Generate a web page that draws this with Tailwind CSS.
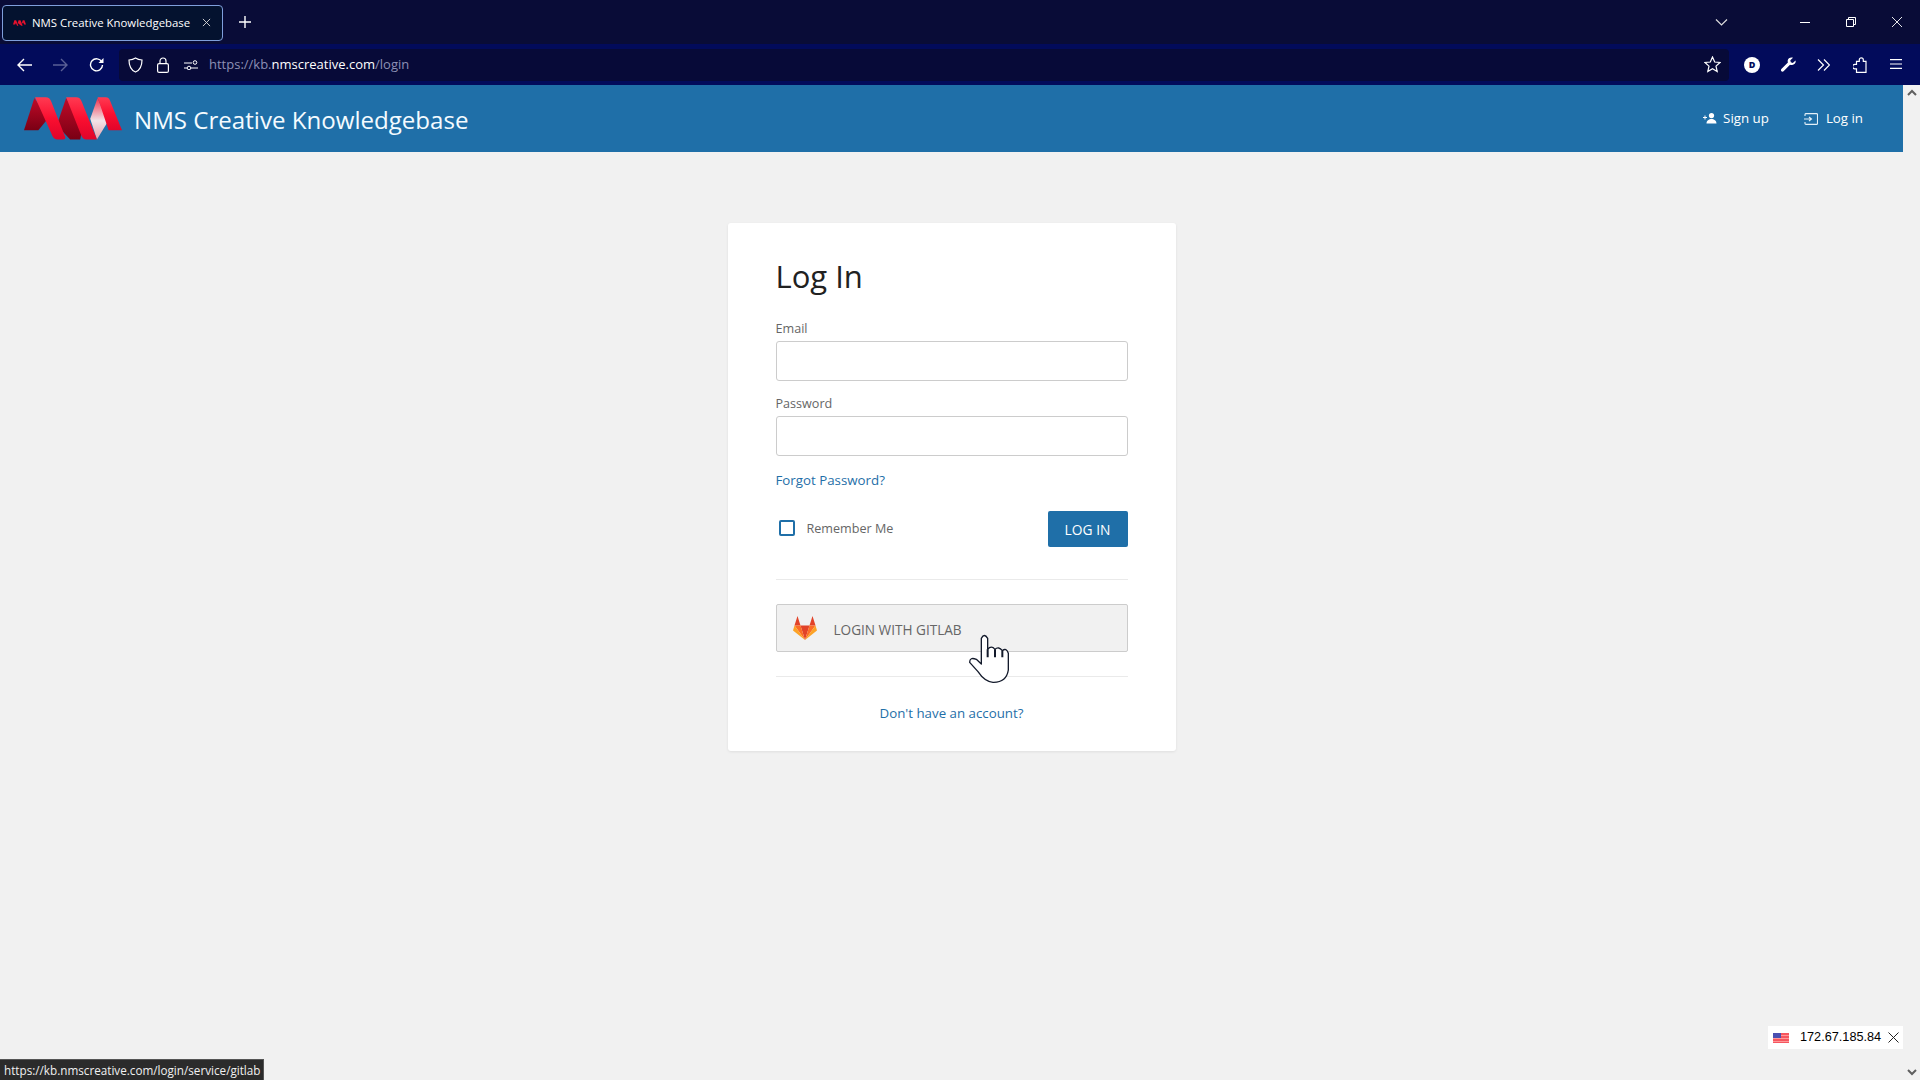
<!DOCTYPE html>
<html lang="en">
<head>
  <meta charset="UTF-8" />
  <title>NMS Creative Knowledgebase</title>
  <script src="https://cdn.jsdelivr.net/npm/@tailwindcss/browser@4"></script>
</head>
<body class="relative h-screen overflow-hidden flex flex-col bg-[#f1f1f1] font-['Open_Sans',sans-serif]">
  <!-- TAB STRIP -->
  <div class="h-[44px] bg-[#090c37] flex items-center pl-[2px] shrink-0">
    <div class="w-[221px] h-[36px] mt-[1px] flex items-center rounded-[4px] border border-[#7f9fdc] bg-[#04122f] pl-[10px] text-white">
      <svg class="w-[13px] h-[6px] shrink-0" viewBox="72 36 293 127"><path fill="#e8112d" d="M72 135 103 36h40l50 126h-30l-25-60-16 33zM178 100l20-64h42l50 126h-32zM270 100l22-64h38l35 99h-40l-27-50-10 27z"/></svg>
      <span class="ml-[6px] text-[11.4px] whitespace-nowrap">NMS Creative Knowledgebase</span>
      <svg class="w-[9px] h-[9px] ml-auto mr-[11px]" viewBox="0 0 10 10" stroke="#ddd" stroke-width="1"><path d="M1 1l8 8M9 1l-8 8"/></svg>
    </div>
    <svg class="w-[12px] h-[12px] ml-[16px]" viewBox="0 0 12 12" stroke="#fff" stroke-width="1.4"><path d="M6 0v12M0 6h12"/></svg>
    <svg class="w-[13px] h-[7px] ml-auto" viewBox="0 0 13 7" fill="none" stroke="#ddd" stroke-width="1.2"><path d="M1 .5l5.5 5.5L12 .5"/></svg>
    <div class="w-[192px] flex items-center pl-[72px]">
      <div class="w-[10px] h-[1px] bg-white"></div>
      <svg class="w-[10px] h-[10px] ml-[36px]" viewBox="0 0 10 10" fill="none" stroke="#fff" stroke-width="1"><path d="M.5 2.500h7v7h-7zM2.500 2.500v-2h7v7h-2"/></svg>
      <svg class="w-[10px] h-[10px] ml-[36px]" viewBox="0 0 10 10" stroke="#fff" stroke-width=".9"><path d="M0 0l10 10M10 0L0 10"/></svg>
    </div>
  </div>

  <!-- TOOLBAR -->
  <div class="h-[41px] bg-[#020b5b] flex items-center shrink-0 pl-[17px]">
    <svg class="w-[15px] h-[14px]" viewBox="0 0 15 14" fill="none" stroke="#fff" stroke-width="1.4"><path d="M15 7H1M7 1L1 7l6 6"/></svg>
    <svg class="w-[15px] h-[14px] ml-[21px]" viewBox="0 0 15 14" fill="none" stroke="#5a6096" stroke-width="1.4"><path d="M0 7h14M8 1l6 6-6 6"/></svg>
    <svg class="w-[15px] h-[15px] ml-[21px]" viewBox="0 0 15 15" fill="none" stroke="#fff" stroke-width="1.4"><path d="M12.800 5A6 6 0 1 0 13.500 8"/><path fill="#fff" stroke="none" d="M14.500 1v5h-5z"/></svg>
    <div class="w-[1610px] h-[32px] ml-[15px] rounded-[4px] bg-[#070a38] flex items-center pl-[9px]">
      <svg class="w-[15px] h-[16px]" viewBox="0 0 15 16" fill="none" stroke="#fff" stroke-width="1.2"><path d="M7.500 1c2 1.300 4 1.800 6.500 2 0 6-1.500 10-6.500 12C2.500 13 1 9 1 3c2.500-.2 4.500-.7 6.500-2z"/></svg>
      <svg class="w-[12px] h-[16px] ml-[14px]" viewBox="0 0 12 16" fill="none" stroke="#fff" stroke-width="1.2"><rect x=".6" y="6.600" width="10.800" height="8.800" rx="1.500"/><path d="M3 6.500V4a3 3 0 0 1 6 0v2.500"/></svg>
      <svg class="w-[14px] h-[10px] ml-[15px]" viewBox="0 0 14 10" fill="none" stroke="#fff" stroke-width="1"><path d="M0 3h8M0 8h3M7 8h7"/><circle cx="11" cy="2.500" r="1.800"/><circle cx="5" cy="8" r="1.800"/></svg>
      <span class="ml-[11px] mt-[1px] text-[13px] text-[#8d90b5] whitespace-nowrap">https://kb.<span class="text-white">nmscreative.com</span>/login</span>
      <svg class="w-[17px] h-[17px] ml-auto mr-[8px]" viewBox="0 0 17 17" fill="none" stroke="#fff" stroke-width="1.2"><path d="M8.500 1l2.200 5 5.300.5-4 3.600 1.200 5.400-4.700-2.800-4.700 2.800 1.200-5.400-4-3.600L6.300 6z"/></svg>
    </div>
    <div class="w-[16px] h-[16px] ml-[15px] rounded-full bg-white flex items-center justify-center text-[9px] font-extrabold text-[#020b5b]">D</div>
    <svg class="w-[15px] h-[15px] ml-[21px]" viewBox="0 0 15 15" fill="#fff"><path d="M14.500 3.500l-2.700 2.400-2-.6-.5-2L12 .7C9.800-.2 7 1 6.700 3.500c-.1.700 0 1.400.2 2L.6 11.800c-.8.800-.8 1.700-.2 2.400.7.700 1.700.6 2.400-.1l6.200-6.300c.7.200 1.400.3 2.100.2 2.600-.4 4.100-2.300 3.400-4.500z"/></svg>
    <svg class="w-[13px] h-[12px] ml-[21px]" viewBox="0 0 13 12" fill="none" stroke="#fff" stroke-width="1.2"><path d="M1 .5L6.500 6 1 11.500M7 .5L12.500 6 7 11.500"/></svg>
    <svg class="w-[14px] h-[16px] ml-[23px]" viewBox="0 0 14 16" fill="none" stroke="#fff" stroke-width="1.2"><path d="M13 15.300H3.500v-3.500H1.800a2 2 0 0 1 0-4.500h1.700V4.300h2.800V2.800a2 2 0 0 1 4 0v1.500H13z"/></svg>
    <svg class="w-[12px] h-[10px] ml-[23px] mt-[-1px]" viewBox="0 0 12 10" stroke="#fff" stroke-width="1.200"><path d="M0 .6h12M0 5h12M0 9.400h12"/></svg>
  </div>

  <div class="flex flex-1 min-h-0">
    <div class="flex-1 flex flex-col">
      <!-- PAGE NAV -->
      <header class="h-[67px] bg-[#1f6fa8] flex items-center text-white">
        <svg class="w-[98px] h-[43px] ml-[24px]" viewBox="72 36 293 127">
          <defs>
            <linearGradient id="dark" x1="0" y1="1" x2="0" y2="0"><stop offset="0" stop-color="#7a0014"/><stop offset="1" stop-color="#c00a28"/></linearGradient>
            <linearGradient id="bright" x1="0" y1="0" x2="0" y2="1"><stop offset="0" stop-color="#ff3a52"/><stop offset=".5" stop-color="#fb0f30"/><stop offset="1" stop-color="#e0042a"/></linearGradient>
            <linearGradient id="shine" x1="0" y1="0" x2="0" y2="1"><stop offset="0" stop-color="#f0334e"/><stop offset=".55" stop-color="#f2e4e8"/><stop offset="1" stop-color="#e8a0ac"/></linearGradient>
          </defs>
          <path fill="url(#dark)" d="M72 135 103 38l42 60-30 37z"/>
          <path fill="url(#dark)" d="M170 120l28-82 50 85-8 39h-30z"/>
          <path fill="url(#shine)" d="M270 100l22-62 30 72-32 52z"/>
          <path fill="url(#bright)" d="M105 36h32c8 0 13 4 17 14l41 104c2 6-1 8-6 8h-17c-7 0-12-3-15-10z"/>
          <path fill="url(#bright)" d="M198 36h30c8 0 13 4 17 14l45 112h-32c-7 0-11-3-14-10z"/>
          <path fill="url(#bright)" d="M292 36h24c8 0 11 4 14 12l35 87h-40z"/>
        </svg>
        <h1 class="ml-[12px] mt-[4px] text-[24.1px] leading-none whitespace-nowrap text-[#f4fbff]">NMS Creative Knowledgebase</h1>
        <nav class="ml-auto flex items-center text-[13.3px] pr-[40px]">
          <a class="flex items-center text-white" href="#">
            <svg class="w-[14px] h-[11px]" viewBox="0 0 14 11" fill="#fff"><circle cx="8.500" cy="2.600" r="2.600"/><path d="M3.500 10.500c0-3 2.500-4.500 5-4.500s5 1.500 5 4.500zM0 4h1.500V2.500h1V4H4v1H2.500v1.500h-1V5H0z"/></svg>
            <span class="ml-[6px]">Sign up</span>
          </a>
          <a class="flex items-center ml-[35px] text-white" href="#">
            <svg class="w-[14px] h-[12px]" viewBox="0 0 14 12" fill="none" stroke="#e4f0f8" stroke-width="1.100"><path d="M1 3V1.500A1 1 0 0 1 2 .6h10.500a1 1 0 0 1 1 1v8.800a1 1 0 0 1-1 1H2a1 1 0 0 1-1-1V9M0 6h7M5 4l2.500 2L5 8"/></svg>
            <span class="ml-[8px]">Log in</span>
          </a>
        </nav>
      </header>

      <!-- LOGIN CARD -->
      <main class="flex-1 pt-[71px]">
        <div class="w-[448px] mx-auto bg-white rounded-[3px] shadow-[0_1px_3px_rgba(0,0,0,0.08)] px-[48px] pt-[31px] pb-[28px] text-[12.6px] text-[#666]">
          <h2 class="h-[44px] leading-[44px] text-[31px] text-[#212121]">Log In</h2>
          <label class="block h-[20px] leading-[20px] mt-[21px] mb-[2px]">Email</label>
          <input type="text" class="block w-full h-[40px] border border-[#ccc] rounded-[3px] bg-white" />
          <label class="block h-[20px] leading-[20px] mt-[13px] mb-[2px]">Password</label>
          <input type="password" class="block w-full h-[40px] border border-[#ccc] rounded-[3px] bg-white" />
          <a class="block h-[20px] leading-[20px] mt-[14px] text-[13.3px] text-[#1f6fa8]" href="#">Forgot Password?</a>
          <div class="flex items-center h-[36px] mt-[21px]">
            <span class="w-[16px] h-[16px] ml-[3px] border-2 border-[#1f6fa8] rounded-[2px] mt-[-2px]"></span>
            <span class="ml-[12px]">Remember Me</span>
            <button class="ml-auto w-[80px] h-[36px] pt-[2px] bg-[#1f6fa8] rounded-[2px] text-[13.8px] text-white">LOG IN</button>
          </div>
          <div class="h-[1px] bg-[#eaeaea] mt-[32px]"></div>
          <button class="flex items-center w-full h-[48px] mt-[24px] pl-[16px] bg-[#f1f1f1] border border-[#ccc] rounded-[2px] text-[13.6px] text-[#666]">
            <svg class="w-[24px] h-[24px]" viewBox="0 0 24 24">
              <path fill="#e24329" d="M4.500 0L1.500 9.500h6zM19.500 0l-3 9.500h6zM7.500 9.500h9L12 24z"/>
              <path fill="#fc6d26" d="M1.500 9.500h6L12 24zM22.500 9.500h-6L12 24z"/>
              <path fill="#fca326" d="M1.500 9.500L0 14.500 12 24zM22.500 9.500l1.500 5L12 24z"/>
            </svg>
            <span class="ml-[17px] mt-[4px]">LOGIN WITH GITLAB</span>
          </button>
          <div class="h-[1px] bg-[#eaeaea] mt-[24px]"></div>
          <a class="block h-[20px] leading-[20px] mt-[26px] text-center text-[13.3px] text-[#1f6fa8]" href="#">Don't have an account?</a>
        </div>
      </main>
    </div>

    <!-- SCROLLBAR -->
    <div class="w-[17px] bg-[#f1f1f1] flex flex-col items-center justify-between py-[3px]">
      <svg class="w-[10px] h-[7px] mt-[1px]" viewBox="0 0 10 7" fill="none" stroke="#5f5f5f" stroke-width="2"><path d="M1 6l4-4 4 4"/></svg>
      <svg class="w-[10px] h-[7px] mb-[1px]" viewBox="0 0 10 7" fill="none" stroke="#5f5f5f" stroke-width="2"><path d="M1 1l4 4 4-4"/></svg>
    </div>
  </div>

  <!-- STATUS OVERLAYS -->
  <div class="absolute left-0 bottom-0 h-[21px] w-[264px] bg-[#2b2b2b] border-t border-r border-[#555] flex items-center pl-[4px] pt-[1px] text-[11.7px] text-[#f0f0f0] whitespace-nowrap">https://kb.nmscreative.com/login/service/gitlab</div>
  <div class="absolute left-[1768px] top-[1026px] w-[135px] h-[23px] bg-white flex items-center pl-[5px] text-[12.7px] text-black font-['Liberation_Sans',sans-serif]">
    <svg class="w-[16px] h-[10px]" viewBox="0 0 16 10">
      <rect width="16" height="10" fill="#f6565f"/>
      <path stroke="#f99" stroke-width="1" d="M0 2.500h16M0 5.500h16M0 8.500h16"/>
      <rect width="8" height="5" fill="#4a4fb0"/>
    </svg>
    <span class="ml-[11px]">172.67.185.84</span>
    <svg class="w-[11px] h-[11px] ml-auto mr-[4px]" viewBox="0 0 11 11" stroke="#222" stroke-width="1"><path d="M.5.5l10 10M10.500.5l-10 10"/></svg>
  </div>

  <!-- HAND CURSOR -->
  <svg class="absolute left-[968px] top-[634px] w-[42px] h-[50px]" viewBox="745 432 126 150" fill="#fff" stroke="#131a2b" stroke-width="4" stroke-linejoin="round">
    <path d="M785 522V445Q794 428 804 445V478Q815 465 826 478Q837 468 848 482Q860 472 866 490V540Q860 578 820 577Q795 575 775 545L750 517Q750 500 770 508Z"/>
    <path fill="none" stroke-width="6" d="M804 478V502M826 478V502M848 482V502"/>
  </svg>
</body>
</html>
